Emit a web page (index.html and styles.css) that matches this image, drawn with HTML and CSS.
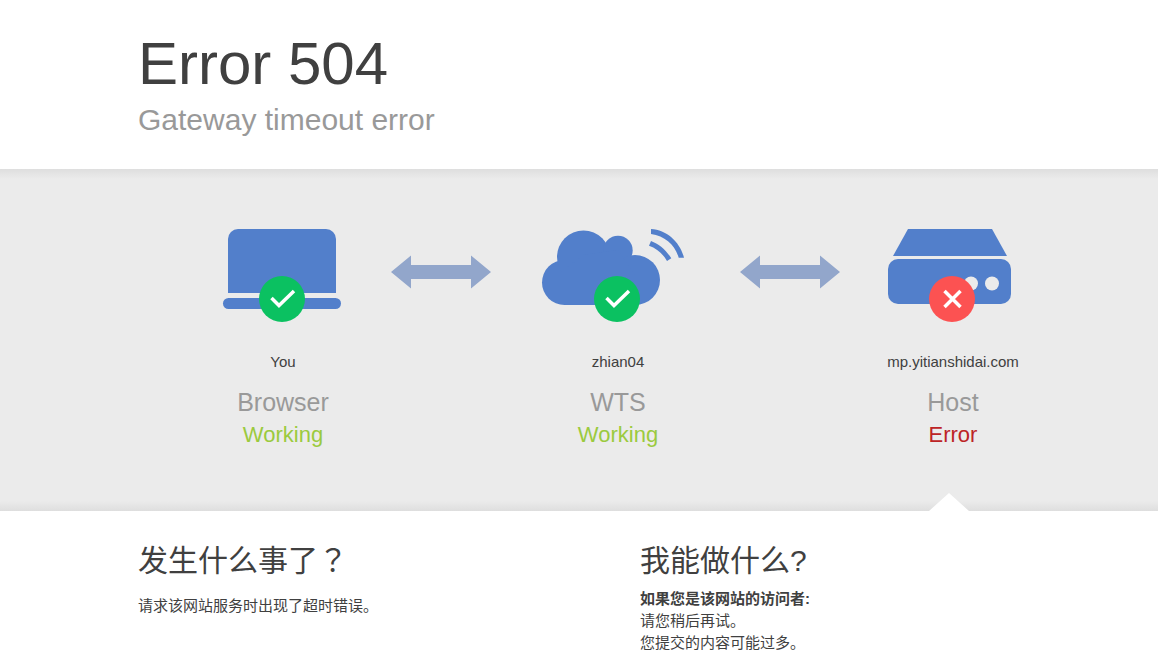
FILE: index.html
```html
<!DOCTYPE html>
<html lang="zh-CN">
<head>
    <meta charset="UTF-8">
    <meta name="viewport" content="width=device-width, initial-scale=1">
    <title>504 Gateway timeout error</title>
    <link rel="stylesheet" href="styles.css">
</head>
<body>
    <header class="wrapper header">
        <h1>Error 504</h1>
        <h2 class="subheadline">Gateway timeout error</h2>
    </header>

    <section class="status">
        <div class="wrapper status-grid">
            <div class="status-item">
                <svg class="icon" viewBox="0 0 160 100" aria-hidden="true">
                    <path fill="#527fcb" d="M25 68V14a10 10 0 0 1 10-10h88a10 10 0 0 1 10 10v54z"/>
                    <rect fill="#527fcb" x="20" y="73" width="118" height="11" rx="5.5"/>
                    <circle fill="#0bc161" cx="79" cy="74" r="23"/>
                    <path fill="none" stroke="#fff" stroke-width="3.5" d="M68.5 73l7.500 7.500L91 66"/>
                </svg>
                <span class="name">You</span>
                <h3>Browser</h3>
                <span class="state ok">Working</span>
            </div>
            <svg class="arrow" viewBox="0 0 100 34" aria-hidden="true">
                <path fill="#92a6cb" d="M0 17L20 0.500V10h60V0.500L100 17 80 33.500V24H20v9.500z"/>
            </svg>
            <div class="status-item">
                <svg class="icon" viewBox="0 0 160 100" aria-hidden="true">
                    <g fill="#527fcb">
                        <circle cx="26.500" cy="57.500" r="22.500"/>
                        <circle cx="45.500" cy="32" r="26.500"/>
                        <circle cx="80" cy="25.500" r="14.700"/>
                        <circle cx="97" cy="55" r="25"/>
                        <path d="M26 45L45 30l35-5 17 25v30H26z"/>
                        <path d="M113 4C129 5 142 17 146 32.700h-5.300C137 20 127 11 113 9z"/>
                        <path d="M113 16C121 19 128 25 133.300 33.300L129 36C125 29 119 23.500 111 20.700z"/>
                    </g>
                    <circle fill="#0bc161" cx="79" cy="74" r="23"/>
                    <path fill="none" stroke="#fff" stroke-width="3.5" d="M68.5 73l7.500 7.500L91 66"/>
                </svg>
                <span class="name">zhian04</span>
                <h3>WTS</h3>
                <span class="state ok">Working</span>
            </div>
            <svg class="arrow" viewBox="0 0 100 34" aria-hidden="true">
                <path fill="#92a6cb" d="M0 17L20 0.500V10h60V0.500L100 17 80 33.500V24H20v9.500z"/>
            </svg>
            <div class="status-item current">
                <svg class="icon" viewBox="0 0 160 100" aria-hidden="true">
                    <path fill="#527fcb" d="M35 4h84l15 27H20z"/>
                    <rect fill="#527fcb" x="15" y="34" width="123" height="45" rx="10"/>
                    <circle fill="#ebebeb" cx="98" cy="58.500" r="7"/>
                    <circle fill="#ebebeb" cx="119" cy="58.500" r="7"/>
                    <circle fill="#fc5252" cx="79" cy="74" r="23"/>
                    <path stroke="#fff" stroke-width="3.500" d="M71.500 66l16 16M87.500 66l-16 16"/>
                </svg>
                <span class="name">mp.yitianshidai.com</span>
                <h3>Host</h3>
                <span class="state bad">Error</span>
            </div>
        </div>
    </section>

    <main class="wrapper columns">
        <section>
            <h2>发生什么事了<span class="mark" lang="zh-TW">？</span></h2>
            <p class="reason">请求该网站服务时出现了超时错误。</p>
        </section>
        <section>
            <h2>我能做什么?</h2>
            <p><strong>如果您是该网站的访问者:</strong></p>
            <p>请您稍后再试。</p>
            <p>您提交的内容可能过多。</p>
        </section>
    </main>
</body>
</html>
```
FILE: styles.css
```css
body {
    margin: 0;
    background: #fff;
    color: #404040;
    font-family: "Liberation Sans", "Noto Sans CJK SC", Arial, sans-serif;
    font-size: 15px;
    line-height: 22px;
}

h1,
h2,
h3,
p {
    margin: 0;
    font-weight: 400;
}

.wrapper {
    max-width: 960px;
    margin: 0 60px 0 138px;
}

.header {
    padding: 30px 0 29px;
}

h1 {
    font-size: 60px;
    line-height: 68px;
}

h2 {
    font-size: 30px;
    line-height: 40px;
}

.subheadline {
    margin-top: 2px;
    color: #999;
}

/* status band */
.status {
    background: linear-gradient(#dedede, #ebebeb 10px, #ebebeb calc(100% - 10px), #dedede);
}

.status-grid {
    display: grid;
    grid-template-columns: 200fr 116fr 238fr 106fr 220fr;
    box-sizing: border-box;
    padding: 56px 35px 0 45px;
}

.status-item {
    display: flex;
    flex-direction: column;
    align-items: center;
    padding-bottom: 60px;
}

.icon {
    width: 160px;
    height: 100px;
    margin-bottom: 26px;
}

.arrow {
    width: 100px;
    height: 34px;
    margin-top: 30px;
    justify-self: center;
}

h3 {
    margin: 13px 0 1px;
    color: #999;
    font-size: 25px;
    line-height: 32px;
}

.state {
    font-size: 22px;
    line-height: 32px;
}

.ok {
    color: #9bca3e;
}

.bad {
    color: #bd2426;
}

/* pointer towards the explanation below */
.current {
    position: relative;
}

.current::after {
    content: "";
    position: absolute;
    bottom: 0;
    left: calc(50% - 24px);
    width: 40px;
    height: 18px;
    background: #fff;
    clip-path: polygon(50% 0, 100% 100%, 0 100%);
}

.columns {
    display: grid;
    grid-template-columns: 1fr 1fr;
    gap: 44px;
    padding: 30px 0;
}

.columns h2 {
    margin-bottom: 7px;
}

/* centred full-width question mark */
.mark {
    font-family: "Noto Sans CJK TC", sans-serif;
    line-height: 30px;
}

.reason {
    padding-top: 7px;
}
```
